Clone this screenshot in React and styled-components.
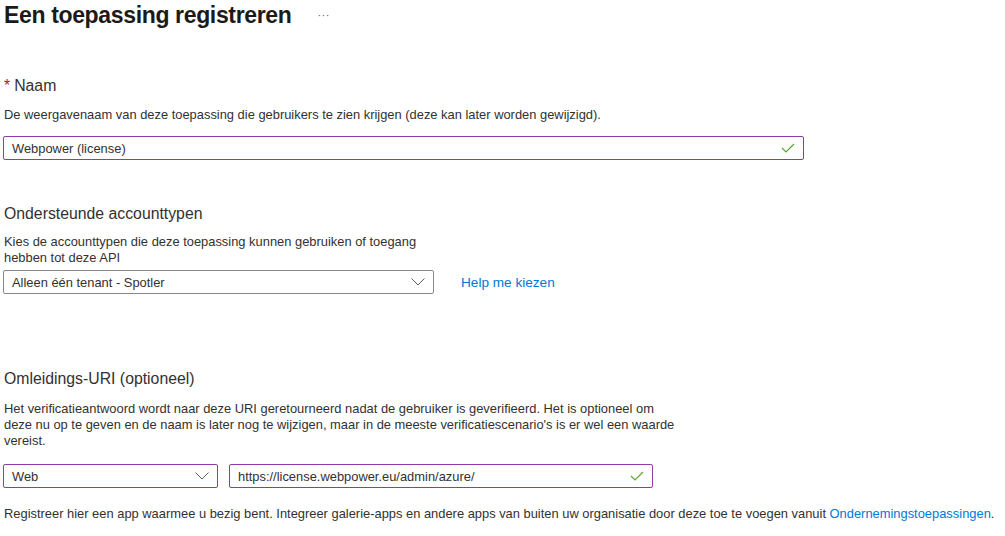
import React from "react";
import styled, { createGlobalStyle } from "styled-components";

const Global = createGlobalStyle`
  html, body { margin: 0; padding: 0; background: #fff; }
  body {
    font-family: "Segoe UI", "Liberation Sans", Arial, sans-serif;
    color: #323130;
    -webkit-font-smoothing: antialiased;
  }
  * { box-sizing: border-box; }
`;

const Page = styled.div`
  width: 1005px;
  height: 536px;
  padding: 0 0 0 4px;
  overflow: hidden;
`;

const Header = styled.div`
  display: flex;
  align-items: center;
  height: 30px;
`;

const Title = styled.h1`
  margin: 0;
  font-size: 23px;
  font-weight: 700;
  line-height: 30px;
  color: #1b1a19;
  letter-spacing: -0.35px;
`;

const More = styled.span`
  margin-left: 26px;
  font-size: 11px;
  color: #605e5c;
  letter-spacing: 0.5px;
  line-height: 1;
`;

const Section = styled.section`
  margin-top: ${(p) => p.$top}px;
`;

const Label = styled.div`
  font-size: 15.8px;
  line-height: 20px;
  color: #323130;
`;

const Required = styled.span`
  color: #a4262c;
  margin-right: 4px;
`;

const Desc = styled.p`
  margin: ${(p) => p.$mt || 0}px 0 0 0;
  font-size: 12.9px;
  line-height: 16px;
  max-width: ${(p) => p.$max || 1000}px;
`;

const Row = styled.div`
  display: flex;
  align-items: center;
  gap: ${(p) => p.$gap || 12}px;
  margin-top: ${(p) => p.$mt || 0}px;
  margin-left: -1px;
`;

const Field = styled.div`
  display: flex;
  align-items: center;
  width: ${(p) => p.$w}px;
  height: 24px;
  border: 1px solid ${(p) => (p.$active ? "#8e3aa8" : "#8a8886")};
  border-radius: 2px;
  padding: 0 8px;
  font-size: 12.9px;
  color: #323130;
  background: #fff;
`;

const Value = styled.span`
  flex: 1;
  white-space: nowrap;
`;

const Link = styled.a`
  color: #0078d4;
  text-decoration: none;
  font-size: ${(p) => p.$size || 12.9}px;
`;

const HelpLink = styled(Link)`
  margin-left: 15px;
`;

const Footer = styled.p`
  margin: 18px 0 0 0;
  font-size: 12.9px;
  line-height: 16px;
  white-space: nowrap;
`;

const Check = () => (
  <svg width="14" height="10" viewBox="0 0 14 10" fill="none">
    <path d="M1 5 L5 9 L13 1" stroke="#5ca62e" strokeWidth="1.2" />
  </svg>
);

const Chevron = () => (
  <svg width="14" height="8" viewBox="0 0 14 8" fill="none">
    <path d="M0.5 0.5 L7 7 L13.5 0.5" stroke="#605e5c" strokeWidth="1" />
  </svg>
);

export default function App() {
  return (
    <Page>
      <Global />
      <Header>
        <Title>Een toepassing registreren</Title>
        <More>···</More>
      </Header>

      <Section $top={46}>
        <Label>
          <Required>*</Required>Naam
        </Label>
        <Desc $mt={11}>
          De weergavenaam van deze toepassing die gebruikers te zien krijgen (deze kan later worden gewijzigd).
        </Desc>
        <Row $mt={13}>
          <Field $w={801} $active>
            <Value>Webpower (license)</Value>
            <Check />
          </Field>
        </Row>
      </Section>

      <Section $top={44}>
        <Label>Ondersteunde accounttypen</Label>
        <Desc $mt={10} $max={430}>
          Kies de accounttypen die deze toepassing kunnen gebruiken of toegang hebben tot deze API
        </Desc>
        <Row $mt={4} $gap={12}>
          <Field $w={431}>
            <Value>Alleen één tenant - Spotler</Value>
            <Chevron />
          </Field>
          <HelpLink $size={13.6}>Help me kiezen</HelpLink>
        </Row>
      </Section>

      <Section $top={75}>
        <Label>Omleidings-URI (optioneel)</Label>
        <Desc $mt={12} $max={680}>
          Het verificatieantwoord wordt naar deze URI geretourneerd nadat de gebruiker is geverifieerd. Het is optioneel om deze nu op te geven en de naam is later nog te wijzigen, maar in de meeste verificatiescenario's is er wel een waarde vereist.
        </Desc>
        <Row $mt={15} $gap={11}>
          <Field $w={215} $active>
            <Value>Web</Value>
            <Chevron />
          </Field>
          <Field $w={424} $active>
            <Value>https://license.webpower.eu/admin/azure/</Value>
            <Check />
          </Field>
        </Row>
      </Section>

      <Footer>
        Registreer hier een app waarmee u bezig bent. Integreer galerie-apps en andere apps van buiten uw organisatie door deze toe te voegen vanuit{" "}
        <Link>Ondernemingstoepassingen</Link>.
      </Footer>
    </Page>
  );
}
